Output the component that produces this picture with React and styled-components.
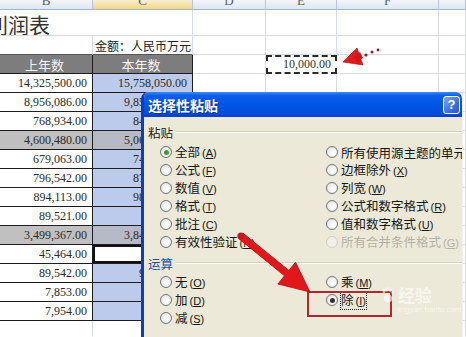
import styled, { createGlobalStyle } from "styled-components";

const GlobalStyle = createGlobalStyle`
  html, body { margin: 0; padding: 0; background: #fff; }
  body { width: 466px; height: 337px; overflow: hidden; }
`;

const Screen = styled.div`
  position: relative;
  width: 466px;
  height: 337px;
  overflow: hidden;
  background: #fff;
  font-family: "Noto Sans CJK SC", sans-serif;
`;

/* ---------- spreadsheet ---------- */

const Sheet = styled.div`
  display: grid;
  grid-template-columns: 93px 100px 73px 71px 102px 27px;
  grid-template-rows: 10px 26px 19px 19px repeat(13, 19px) 16px;
`;

const ColHead = styled.div`
  box-sizing: border-box;
  border-right: 1px solid #b6c5d8;
  border-bottom: 1px solid #9eb6ce;
  background: ${({ $active }) =>
    $active
      ? "linear-gradient(#f7efd6, #f6d57c)"
      : "linear-gradient(#f3f6fa, #dfe6ef)"};
  font-family: "Liberation Serif", serif;
  font-size: 13px;
  line-height: 2px;
  color: #56606c;
  text-align: center;
  overflow: hidden;
`;

const Cell = styled.div`
  box-sizing: border-box;
  grid-column: ${({ $span }) => ($span ? `span ${$span}` : "auto")};
  border-right: 1px solid ${({ $right }) => $right || "#d9dde3"};
  border-bottom: 1px solid ${({ $bottom }) => $bottom || "#d9dde3"};
  background: ${({ $bg }) => $bg || "#fff"};
  box-shadow: ${({ $active }) => ($active ? "inset 0 0 0 2px #111" : "none")};
  display: flex;
  align-items: center;
  justify-content: ${({ $align }) =>
    $align === "right" ? "flex-end" : $align === "center" ? "center" : "flex-start"};
  padding: 0 5px 0 2px;
  overflow: hidden;
  white-space: nowrap;
  font-family: "Liberation Serif", serif;
  font-size: 12px;
  color: ${({ $ink }) => $ink || "#2a2a2a"};
`;

const Title = styled.span`
  margin-left: -15px;
  margin-top: 2px;
  font-family: "Noto Sans CJK SC", sans-serif;
  font-size: 21px;
  color: #333;
`;

const Note = styled.span`
  font-family: "Noto Sans CJK SC", sans-serif;
  font-size: 12px;
  color: #222;
`;

const HeadText = styled.span`
  font-family: "Noto Sans CJK SC", sans-serif;
  font-size: 13px;
  color: #f4f4f4;
`;

const Marquee = styled.div`
  box-sizing: border-box;
  border: 2px dashed #2b2b2b;
  background: #fff;
  display: flex;
  align-items: center;
  justify-content: flex-end;
  padding-right: 4px;
  font-family: "Liberation Serif", serif;
  font-size: 12px;
  color: #333;
`;

/* ---------- dialog ---------- */

const Dialog = styled.div`
  position: absolute;
  left: 141px;
  top: 92px;
  width: 322px;
  height: 260px;
  box-sizing: border-box;
  border-left: 3px solid #0c3ec0;
  border-right: 1px solid #f4f2ea;
  border-radius: 7px 7px 0 0;
  background: #ece9d8;
  overflow: hidden;
  font-family: "Noto Sans CJK SC", sans-serif;
`;

const TitleBar = styled.div`
  height: 25px;
  display: flex;
  align-items: center;
  justify-content: space-between;
  padding: 0 2px 0 4px;
  background: linear-gradient(
    #3d8af7 0%,
    #0c5fe9 14%,
    #0055e5 50%,
    #014bdb 88%,
    #0640c2 100%
  );
`;

const TitleText = styled.span`
  font-size: 14px;
  font-weight: 700;
  color: #fff;
  text-shadow: 1px 1px 0 #0a2f8f;
`;

const HelpButton = styled.span`
  width: 17px;
  height: 18px;
  box-sizing: border-box;
  border: 1px solid #fff;
  border-radius: 3px;
  background: linear-gradient(135deg, #86a8f0, #3f6fdc 60%, #2b58c8);
  color: #fff;
  font-family: "Liberation Sans", sans-serif;
  font-weight: 700;
  font-size: 13px;
  line-height: 16px;
  text-align: center;
`;

const Body = styled.div`
  padding-top: 6px;
`;

const SectionHead = styled.div`
  height: 18px;
  display: flex;
  align-items: center;
  gap: 3px;
  padding-left: 4px;
  margin-top: ${({ $gap }) => $gap || 0}px;
`;

const SectionLabel = styled.span`
  font-size: 12.5px;
  color: ${({ $ink }) => $ink || "#1c1c1c"};
`;

const Rule = styled.span`
  flex: 1;
  border-top: 1px solid #d0d0bf;
  border-bottom: 1px solid #fff;
`;

const Options = styled.div`
  display: grid;
  grid-template-columns: 166px 1fr;
  grid-template-rows: repeat(${({ $rows }) => $rows}, 18px);
  grid-auto-flow: column;
  padding-left: 16px;
  margin-top: ${({ $gap }) => $gap || 0}px;
`;

const Option = styled.div`
  display: flex;
  align-items: center;
  gap: 3px;
  white-space: nowrap;
`;

const Circle = styled.span`
  position: relative;
  flex: none;
  width: 12px;
  height: 12px;
  box-sizing: border-box;
  border-radius: 50%;
  border: 1px solid ${({ $disabled }) => ($disabled ? "#cfccbc" : "#6c7480")};
  background: ${({ $disabled }) =>
    $disabled ? "#f1efe6" : "radial-gradient(circle at 65% 65%, #fff, #e3e2da)"};

  &::after {
    content: "";
    display: ${({ $checked }) => ($checked ? "block" : "none")};
    position: absolute;
    left: 2.5px;
    top: 2.5px;
    width: 5px;
    height: 5px;
    border-radius: 50%;
    background: ${({ $dot }) => $dot || "#3a9a3a"};
  }
`;

const OptionText = styled.span`
  font-size: 12.5px;
  line-height: 15px;
  color: ${({ $disabled }) => ($disabled ? "#b4b1a2" : "#161616")};
  outline: ${({ $focus }) => ($focus ? "1px dotted #222" : "none")};
  outline-offset: 0;
`;

const Key = styled.span`
  font-family: "Liberation Sans", sans-serif;
  font-size: 11px;
  margin-left: 2px;
`;

/* ---------- annotations ---------- */

const RedBox = styled.div`
  position: absolute;
  left: 307px;
  top: 291px;
  width: 85px;
  height: 26px;
  box-sizing: border-box;
  border: 2px solid #b02a2c;
`;

const Watermark = styled.div`
  position: absolute;
  left: 381px;
  top: 285px;
  display: flex;
  flex-direction: column;
  align-items: flex-start;
  color: rgba(255, 255, 255, 0.6);
  font-family: "Noto Sans CJK SC", sans-serif;
`;

const MarkRow = styled.div`
  display: flex;
  align-items: center;
  gap: 3px;
  font-size: 17px;
  font-weight: 700;
  line-height: 20px;
`;

const MarkUrl = styled.div`
  font-family: "Liberation Sans", sans-serif;
  font-size: 8px;
  line-height: 9px;
  padding-left: 16px;
`;

const Overlay = styled.svg`
  position: absolute;
  left: 0;
  top: 0;
  pointer-events: none;
`;

const headers = ["B", "C", "D", "E", "F", ""];

const rows = [
  ["14,325,500.00", "15,758,050.00"],
  ["8,956,086.00", "9,851,694.60"],
  ["768,934.00", "845,827.40"],
  ["4,600,480.00", "5,060,528.00", "gray"],
  ["679,063.00", "746,969.30"],
  ["796,542.00", "876,196.20"],
  ["894,113.00", "983,524.30"],
  ["89,521.00", "9,847.31"],
  ["3,499,367.00", "3,849,303.70", "gray"],
  ["45,464.00", "", "active"],
  ["89,542.00", "98,496.20"],
  ["7,853.00", "8,638.30"],
  ["7,954.00", "8,749.40"],
];

const pasteLeft = [
  ["全部", "A", { checked: true }],
  ["公式", "F"],
  ["数值", "V"],
  ["格式", "T"],
  ["批注", "C"],
  ["有效性验证", "N"],
];

const pasteRight = [
  ["所有使用源主题的单元", null],
  ["边框除外", "X"],
  ["列宽", "W"],
  ["公式和数字格式", "R"],
  ["值和数字格式", "U"],
  ["所有合并条件格式", "G", { disabled: true }],
];

const ops = [
  ["无", "O"],
  ["加", "D"],
  ["减", "S"],
  ["乘", "M"],
  ["除", "I", { checked: true, dot: "#333", focus: true }],
];

function Radio({ label, hotkey, opts = {} }) {
  return (
    <Option>
      <Circle $checked={opts.checked} $dot={opts.dot} $disabled={opts.disabled} />
      <OptionText $disabled={opts.disabled} $focus={opts.focus}>
        {label}
        {hotkey && (
          <Key>
            (<u>{hotkey}</u>)
          </Key>
        )}
      </OptionText>
    </Option>
  );
}

function Blank({ n }) {
  return Array.from({ length: n }, (_, i) => <Cell key={i} />);
}

export default function App() {
  const black = "#1d1d1d";
  return (
    <Screen>
      <GlobalStyle />
      <Sheet>
        {headers.map((h, i) => (
          <ColHead key={i} $active={h === "C"}>
            {h}
          </ColHead>
        ))}

        <Cell $span={2} $bottom="#d9dde3">
          <Title>利润表</Title>
        </Cell>
        <Blank n={4} />

        <Cell $bottom="#555" />
        <Cell $bottom="#555">
          <Note>金额：人民币万元</Note>
        </Cell>
        <Blank n={4} />

        <Cell $bg="#7d7d7d" $right={black} $bottom={black} $align="center">
          <HeadText>上年数</HeadText>
        </Cell>
        <Cell $bg="#7d7d7d" $right={black} $bottom={black} $align="center">
          <HeadText>本年数</HeadText>
        </Cell>
        <Cell />
        <Marquee>10,000.00</Marquee>
        <Blank n={2} />

        {rows.map(([prev, cur, kind], i) => [
          <Cell
            key={`b${i}`}
            $align="right"
            $right={black}
            $bottom={black}
            $bg={kind === "gray" ? "#c0c0c0" : "#fff"}
          >
            {prev}
          </Cell>,
          <Cell
            key={`c${i}`}
            $align="right"
            $right={black}
            $bottom={black}
            $active={kind === "active"}
            $bg={kind === "gray" ? "#b5bac6" : kind === "active" ? "#fff" : "#bccbeb"}
          >
            {cur}
          </Cell>,
          ...[2, 3, 4, 5].map((c) => <Cell key={`x${i}-${c}`} />),
        ])}

        <Cell $bottom="#fff" />
        <Cell $bottom="#fff" />
        <Cell $bottom="#fff" />
        <Cell $bottom="#fff" />
        <Cell $bottom="#fff" />
        <Cell $bottom="#fff" />
      </Sheet>

      <Dialog>
        <TitleBar>
          <TitleText>选择性粘贴</TitleText>
          <HelpButton>?</HelpButton>
        </TitleBar>
        <Body>
          <SectionHead>
            <SectionLabel>粘贴</SectionLabel>
            <Rule />
          </SectionHead>
          <Options $rows={6} $gap={2}>
            {[...pasteLeft, ...pasteRight].map(([label, key, opts]) => (
              <Radio key={label} label={label} hotkey={key} opts={opts} />
            ))}
          </Options>
          <SectionHead $gap={3}>
            <SectionLabel $ink="#2150a8">运算</SectionLabel>
            <Rule />
          </SectionHead>
          <Options $rows={3} $gap={1}>
            {ops.map(([label, key, opts]) => (
              <Radio key={label} label={label} hotkey={key} opts={opts} />
            ))}
          </Options>
        </Body>
      </Dialog>

      <RedBox />

      <Watermark>
        <MarkRow>
          <svg width="14" height="16" viewBox="0 0 14 16">
            <g fill="rgba(255,255,255,0.6)">
              <ellipse cx="3" cy="4" rx="1.6" ry="2.2" />
              <ellipse cx="6" cy="2.4" rx="1.6" ry="2.2" />
              <ellipse cx="9.4" cy="2.8" rx="1.6" ry="2.2" />
              <ellipse cx="11.8" cy="5.6" rx="1.5" ry="2" />
              <path d="M7 7 C3.5 7 2 11 3 13.5 C4 15.5 10 15.5 11 13.5 C12 11 10.5 7 7 7Z" />
            </g>
          </svg>
          <span>经验</span>
        </MarkRow>
        <MarkUrl>jingyan.baidu.com</MarkUrl>
      </Watermark>

      <Overlay width="466" height="337" viewBox="0 0 466 337">
        <defs>
          <filter id="soft" x="-20%" y="-20%" width="140%" height="140%">
            <feGaussianBlur stdDeviation="0.7" />
          </filter>
        </defs>
        <g filter="url(#soft)">
          <polygon
            points="243.2,233.3 288.9,270.4 295.5,262.2 310,292 277.9,284 284.5,275.8 238.8,238.7"
            fill="#e3191c"
            stroke="#a80f12"
            strokeWidth="0.8"
            strokeLinejoin="round"
          />
          <circle cx="241" cy="236" r="3.6" fill="#c8161a" />
          <polygon points="343,62 357,48 363,65" fill="#e01a1f" stroke="#a80f12" strokeWidth="0.6" />
          <polygon points="354,57 360,52 363,58 357,62" fill="#d0181c" />
          <circle cx="366" cy="55" r="1.6" fill="#9d1b24" />
          <circle cx="372" cy="52" r="1.5" fill="#9d1b24" />
          <circle cx="378" cy="50" r="1.4" fill="#9d1b24" />
        </g>
      </Overlay>
    </Screen>
  );
}
